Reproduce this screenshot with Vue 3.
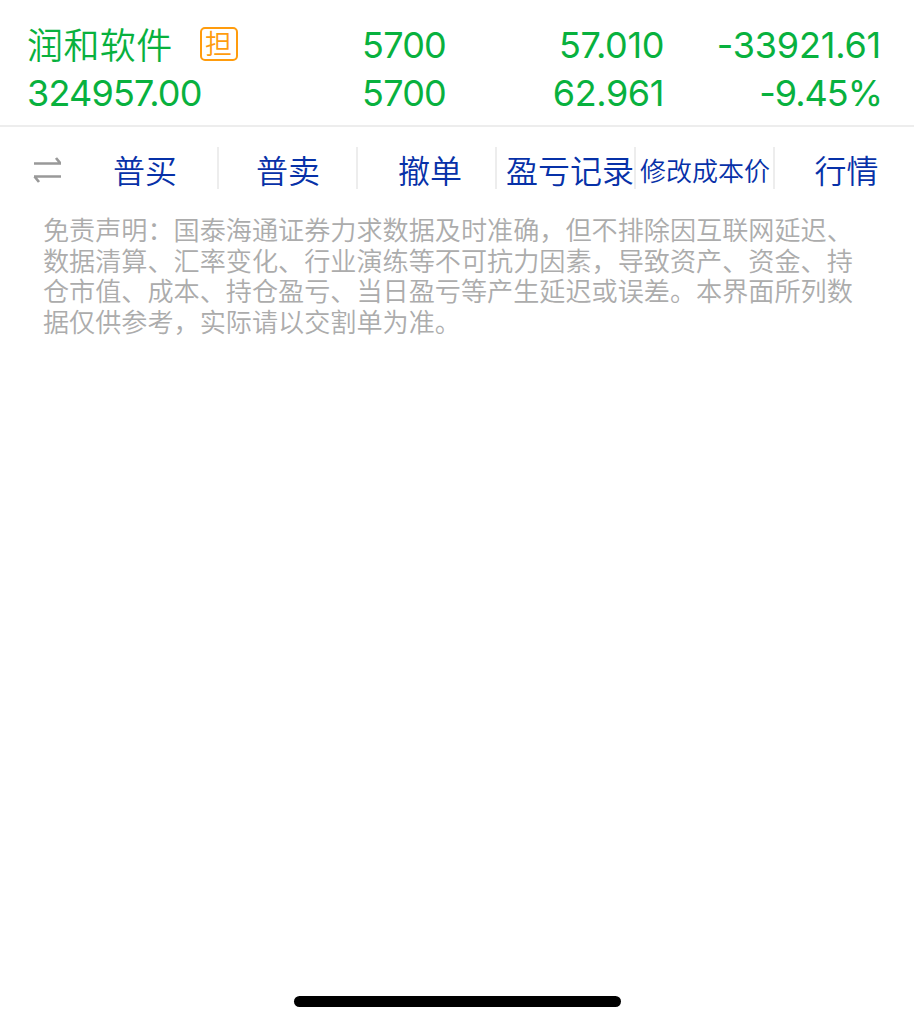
<script setup>
const position = {
  name: '润和软件',
  value: '324957.00',
  held: '5700',
  available: '5700',
  price: '57.010',
  cost: '62.961',
  profit: '-33921.61',
  ratio: '-9.45%',
}

const actions = [
  { key: 'buy', label: '普买' },
  { key: 'sell', label: '普卖' },
  { key: 'cancel', label: '撤单' },
  { key: 'records', label: '盈亏记录' },
  { key: 'cost', label: '修改成本价' },
  { key: 'quote', label: '行情' },
]

const disclaimer = [
  '免责声明：国泰海通证券力求数据及时准确，但不排除因互联网延迟、',
  '数据清算、汇率变化、行业演练等不可抗力因素，导致资产、资金、持',
  '仓市值、成本、持仓盈亏、当日盈亏等产生延迟或误差。本界面所列数',
  '据仅供参考，实际请以交割单为准。',
]
</script>

<template>
  <div class="page">
    <section class="position">
      <div class="col">
        <div class="name">{{ position.name }}<span class="badge">担</span></div>
        <div>{{ position.value }}</div>
      </div>
      <div class="col right">
        <div>{{ position.held }}</div>
        <div>{{ position.available }}</div>
      </div>
      <div class="col right price">
        <div>{{ position.price }}</div>
        <div>{{ position.cost }}</div>
      </div>
      <div class="col right">
        <div class="profit">{{ position.profit }}</div>
        <div class="ratio">{{ position.ratio }}</div>
      </div>
    </section>

    <nav class="actions">
      <svg class="swap" viewBox="0 0 28 30" width="28" height="30">
        <path d="M1 8.5H28M23 3L27.5 8.5M28 21.5H1M1.5 21.5L6 27" />
      </svg>
      <div v-for="item in actions" :key="item.key" class="action" :class="item.key">
        {{ item.label }}
      </div>
    </nav>

    <p class="disclaimer">
      <span v-for="line in disclaimer" :key="line">{{ line }}</span>
    </p>

    <div class="home-bar"></div>
  </div>
</template>

<style>
body {
  background: #fff;
}
</style>

<style scoped>
.page {
  display: flex;
  flex-direction: column;
  height: 1024px;
  overflow: hidden;
  font-family: Inter, 'Noto Sans CJK SC', sans-serif;
}

.position {
  display: grid;
  grid-template-columns: 218px 201px 218px 217px;
  box-sizing: border-box;
  height: 127px;
  padding: 21px 32px 0 27px;
  border-bottom: 2px solid #ededed;
  color: #08b13e;
  font-size: 36px;
  line-height: 48px;
  letter-spacing: -0.8px;
}

.col > div {
  height: 48px;
  white-space: nowrap;
}

.right {
  text-align: right;
}

.price {
  letter-spacing: -0.4px;
}

.profit {
  letter-spacing: -0.2px;
}

.col > .ratio {
  margin-right: -1px;
  letter-spacing: -1px;
}

.col > .name {
  display: flex;
  align-items: flex-start;
  font-weight: 350;
  line-height: 50px;
  letter-spacing: 0.4px;
}

.badge {
  box-sizing: border-box;
  width: 38px;
  height: 34px;
  margin: 6px 0 0 27px;
  border: 2px solid #ff9c0d;
  border-radius: 5px;
  color: #ff9c0d;
  font-size: 27px;
  line-height: 31px;
  letter-spacing: 0;
  text-align: center;
}

.actions {
  display: flex;
  align-items: center;
  height: 82px;
  padding-left: 33px;
}

.swap {
  flex-shrink: 0;
  margin: 4px 19px 0 0;
  fill: none;
  stroke: #999;
  stroke-width: 2.7;
}

.action {
  box-sizing: border-box;
  flex: 0 0 139px;
  min-width: 0;
  height: 42px;
  border-right: 2px solid #ededed;
  color: #0731a8;
  font-size: 32px;
  font-weight: 350;
  line-height: 49px;
  text-align: center;
  white-space: nowrap;
}

.buy {
  padding-right: 7px;
}

.sell {
  padding-left: 1px;
}

.cancel {
  padding-left: 7px;
}

.records {
  flex-basis: 139px;
  width: 139px;
  padding-left: 9px;
}

.cost {
  padding-left: 1px;
  font-size: 26px;
}

.quote {
  padding-left: 4px;
  border-right: 0;
}

.disclaimer {
  margin: 7px 0 0 43px;
  color: #acacac;
  font-size: 26.13px;
  font-weight: 350;
  line-height: 30.5px;
}

.disclaimer span {
  display: block;
  white-space: nowrap;
}

.home-bar {
  width: 327px;
  height: 11px;
  margin: auto auto 17px 294px;
  border-radius: 6px;
  background: #000;
}
</style>
